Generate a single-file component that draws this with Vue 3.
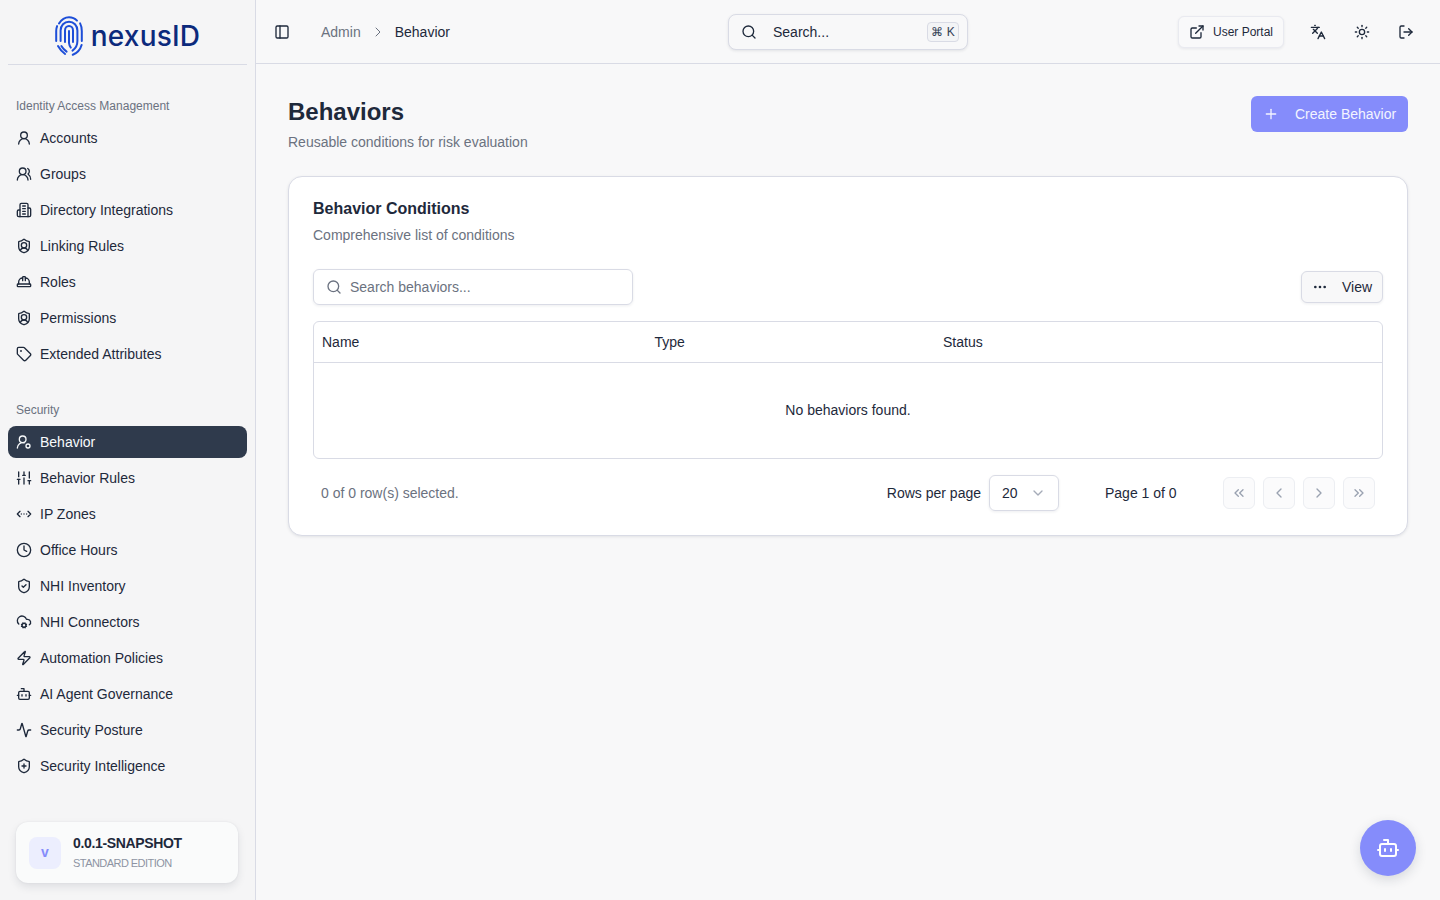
<script setup>
import { ref } from "vue";

const shield =
  '<path d="M20 13c0 5-3.5 7.5-7.66 8.95a1 1 0 0 1-.67-.01C7.5 20.5 4 18 4 13V6a1 1 0 0 1 1-1c2 0 4.5-1.2 6.24-2.72a1.17 1.17 0 0 1 1.52 0C14.51 3.81 17 5 19 5a1 1 0 0 1 1 1z"/>';

const icons = {
  user: '<circle cx="12" cy="8" r="5"/><path d="M20 21a8 8 0 0 0-16 0"/>',
  users:
    '<path d="M18 21a8 8 0 0 0-16 0"/><circle cx="10" cy="8" r="5"/><path d="M22 20c0-3.37-2-6.5-4-8a5 5 0 0 0-.45-8.3"/>',
  building:
    '<path d="M6 22V4a2 2 0 0 1 2-2h8a2 2 0 0 1 2 2v18Z"/><path d="M6 12H4a2 2 0 0 0-2 2v6a2 2 0 0 0 2 2h2"/><path d="M18 9h2a2 2 0 0 1 2 2v9a2 2 0 0 1-2 2h-2"/><path d="M10 6h4"/><path d="M10 10h4"/><path d="M10 14h4"/><path d="M10 18h4"/>',
  shieldUser:
    shield + '<path d="M6.376 18.91a6 6 0 0 1 11.249.003"/><circle cx="12" cy="11" r="4"/>',
  hardHat:
    '<path d="M10 10V5a1 1 0 0 1 1-1h2a1 1 0 0 1 1 1v5"/><path d="M14 6a6 6 0 0 1 6 6v3"/><path d="M4 15v-3a6 6 0 0 1 6-6"/><rect x="2" y="15" width="20" height="4" rx="1"/>',
  tag: '<path d="M12.586 2.586A2 2 0 0 0 11.172 2H4a2 2 0 0 0-2 2v7.172a2 2 0 0 0 .586 1.414l8.704 8.704a2.426 2.426 0 0 0 3.42 0l6.58-6.58a2.426 2.426 0 0 0 0-3.42z"/><circle cx="7.5" cy="7.5" r=".5" fill="currentColor"/>',
  userCog:
    '<path d="M2 21a8 8 0 0 1 10.434-7.62"/><circle cx="10" cy="8" r="5"/><circle cx="18" cy="18" r="3"/>',
  sliders:
    '<path d="M4 21v-7"/><path d="M4 10V3"/><path d="M12 21v-9"/><path d="M12 8V3"/><path d="M20 21v-5"/><path d="M20 12V3"/><path d="M2 14h4"/><path d="M10 8h4"/><path d="M18 16h4"/>',
  chevronsDots:
    '<path d="m18 8 4 4-4 4"/><path d="m6 8-4 4 4 4"/><path d="M8 12h.01"/><path d="M12 12h.01"/><path d="M16 12h.01"/>',
  clock: '<circle cx="12" cy="12" r="10"/><polyline points="12 6 12 12 16 14"/>',
  shieldCheck: shield + '<path d="m9 12 2 2 4-4"/>',
  cloudCog:
    '<circle cx="12" cy="17" r="3"/><path d="M4.2 15.1A7 7 0 1 1 15.71 8h1.79a4.5 4.5 0 0 1 2.5 8.2"/><path d="m15.7 18.4-.9-.3"/><path d="m9.2 15.9-.9-.3"/><path d="m10.6 20.7.3-.9"/><path d="m13.1 14.2.3-.9"/><path d="m13.6 20.7-.4-1"/><path d="m10.8 14.3-.4-1"/><path d="m8.3 18.6 1-.4"/><path d="m14.7 15.8 1-.4"/>',
  zap: '<path d="M4 14a1 1 0 0 1-.78-1.63l9.9-10.2a.5.5 0 0 1 .86.46l-1.92 6.02A1 1 0 0 0 13 10h7a1 1 0 0 1 .78 1.63l-9.9 10.2a.5.5 0 0 1-.86-.46l1.92-6.02A1 1 0 0 0 11 14z"/>',
  bot: '<path d="M12 8V4H8"/><rect x="4" y="8" width="16" height="12" rx="2"/><path d="M2 14h2"/><path d="M20 14h2"/><path d="M15 13v2"/><path d="M9 13v2"/>',
  activity:
    '<path d="M22 12h-2.48a2 2 0 0 0-1.93 1.46l-2.35 8.36a.25.25 0 0 1-.48 0L9.24 2.18a.25.25 0 0 0-.48 0l-2.35 8.36A2 2 0 0 1 4.49 12H2"/>',
  shieldPlus: shield + '<path d="M9 12h6"/><path d="M12 9v6"/>',
  panel: '<rect x="3" y="3" width="18" height="18" rx="2"/><path d="M9 3v18"/>',
  search: '<path d="m21 21-4.34-4.34"/><circle cx="11" cy="11" r="8"/>',
  external:
    '<path d="M15 3h6v6"/><path d="M10 14 21 3"/><path d="M18 13v6a2 2 0 0 1-2 2H5a2 2 0 0 1-2-2V8a2 2 0 0 1 2-2h6"/>',
  languages:
    '<path d="m5 8 6 6"/><path d="m4 14 6-6 2-3"/><path d="M2 5h12"/><path d="M7 2h1"/><path d="m22 22-5-10-5 10"/><path d="M14 18h6"/>',
  sun: '<circle cx="12" cy="12" r="4"/><path d="M12 2v2"/><path d="M12 20v2"/><path d="m4.93 4.93 1.41 1.41"/><path d="m17.66 17.66 1.41 1.41"/><path d="M2 12h2"/><path d="M20 12h2"/><path d="m6.34 17.66-1.41 1.41"/><path d="m19.07 4.93-1.41 1.41"/>',
  logout:
    '<path d="m16 17 5-5-5-5"/><path d="M21 12H9"/><path d="M9 21H5a2 2 0 0 1-2-2V5a2 2 0 0 1 2-2h4"/>',
  plus: '<path d="M5 12h14"/><path d="M12 5v14"/>',
  ellipsis:
    '<circle cx="12" cy="12" r="1"/><circle cx="19" cy="12" r="1"/><circle cx="5" cy="12" r="1"/>',
  chevronRight: '<path d="m9 18 6-6-6-6"/>',
  chevronLeft: '<path d="m15 18-6-6 6-6"/>',
  chevronDown: '<path d="m6 9 6 6 6-6"/>',
  chevronsLeft: '<path d="m11 17-5-5 5-5"/><path d="m18 17-5-5 5-5"/>',
  chevronsRight: '<path d="m6 17 5-5-5-5"/><path d="m13 17 5-5-5-5"/>',
};

const groups = ref([
  {
    label: "Identity Access Management",
    items: [
      { name: "Accounts", icon: "user" },
      { name: "Groups", icon: "users" },
      { name: "Directory Integrations", icon: "building" },
      { name: "Linking Rules", icon: "shieldUser" },
      { name: "Roles", icon: "hardHat" },
      { name: "Permissions", icon: "shieldUser" },
      { name: "Extended Attributes", icon: "tag" },
    ],
  },
  {
    label: "Security",
    items: [
      { name: "Behavior", icon: "userCog", active: true },
      { name: "Behavior Rules", icon: "sliders" },
      { name: "IP Zones", icon: "chevronsDots" },
      { name: "Office Hours", icon: "clock" },
      { name: "NHI Inventory", icon: "shieldCheck" },
      { name: "NHI Connectors", icon: "cloudCog" },
      { name: "Automation Policies", icon: "zap" },
      { name: "AI Agent Governance", icon: "bot" },
      { name: "Security Posture", icon: "activity" },
      { name: "Security Intelligence", icon: "shieldPlus" },
    ],
  },
]);

const pageButtons = ["chevronsLeft", "chevronLeft", "chevronRight", "chevronsRight"];
const topIcons = ["languages", "sun", "logout"];
</script>

<template>
  <div class="layout">
    <aside class="sidebar">
      <div class="brand">
        <svg class="print" viewBox="0 0 28 40" fill="none" stroke="#1d4ed8" stroke-width="2" stroke-linecap="round">
          <path d="M4 7.5C6.4 3.6 10 1.2 14 1.2c3.2 0 6 1.3 8 3.4" />
          <path d="M1.2 25V15c0-1.8.3-3.4.9-4.9" />
          <path d="M25.1 7.4c1.1 2.1 1.7 4.6 1.7 7.6v10" />
          <path d="M3 30c1.7 3 4.1 5.9 7.1 8" />
          <path d="M26.6 29c-1.2 4.2-3.6 7.8-8.8 9.8" />
          <path d="M5.6 25V14.5C5.6 9.6 9.2 5.8 14 5.8s8.4 3.8 8.4 8.7V25c0 4.2-1.7 7.4-4.9 9.6" />
          <path d="M10 26V14.4c0-2.5 1.8-4.4 4-4.4s4 1.9 4 4.4V26" />
          <path d="M6.4 30c1.3 2.2 3 4.1 5.2 5.6" />
          <path d="M14 15v12c.2 2 .8 3.4 1.8 4.6" />
        </svg>
        <span class="wordmark">nexusID</span>
      </div>

      <nav class="nav">
        <section v-for="group in groups" :key="group.label" class="group">
          <div class="group-label">{{ group.label }}</div>
          <a v-for="item in group.items" :key="item.name" class="nav-item" :class="{ active: item.active }">
            <svg class="ic" viewBox="0 0 24 24" v-html="icons[item.icon]"></svg>
            <span>{{ item.name }}</span>
          </a>
        </section>
      </nav>

      <div class="version">
        <div class="version-badge">v</div>
        <div>
          <div class="version-name">0.0.1-SNAPSHOT</div>
          <div class="version-edition">STANDARD EDITION</div>
        </div>
      </div>
    </aside>

    <div class="main">
      <header class="topbar">
        <div class="top-left">
          <button class="icon-btn"><svg class="ic" viewBox="0 0 24 24" v-html="icons.panel"></svg></button>
          <div class="crumbs">
            <span class="crumb-muted">Admin</span>
            <svg class="ic crumb-sep" viewBox="0 0 24 24" v-html="icons.chevronRight"></svg>
            <span>Behavior</span>
          </div>
        </div>
        <div class="top-search">
          <svg class="ic" viewBox="0 0 24 24" v-html="icons.search"></svg>
          <span class="top-search-text">Search...</span>
          <kbd>⌘ K</kbd>
        </div>
        <div class="top-right">
          <button class="portal"><svg class="ic" viewBox="0 0 24 24" v-html="icons.external"></svg>User Portal</button>
          <button v-for="name in topIcons" :key="name" class="icon-btn">
            <svg class="ic" viewBox="0 0 24 24" v-html="icons[name]"></svg>
          </button>
        </div>
      </header>

      <main class="content">
        <div class="page-head">
          <div>
            <h1>Behaviors</h1>
            <p>Reusable conditions for risk evaluation</p>
          </div>
          <button class="create"><svg class="ic" viewBox="0 0 24 24" v-html="icons.plus"></svg>Create Behavior</button>
        </div>

        <div class="card">
          <h2>Behavior Conditions</h2>
          <p class="card-desc">Comprehensive list of conditions</p>

          <div class="toolbar">
            <label class="filter">
              <svg class="ic" viewBox="0 0 24 24" v-html="icons.search"></svg>
              <input placeholder="Search behaviors..." />
            </label>
            <button class="view"><svg class="ic" viewBox="0 0 24 24" v-html="icons.ellipsis"></svg>View</button>
          </div>

          <div class="table-wrap">
            <table>
              <thead>
                <tr>
                  <th class="col-name">Name</th>
                  <th class="col-type">Type</th>
                  <th>Status</th>
                </tr>
              </thead>
              <tbody>
                <tr>
                  <td colspan="3">No behaviors found.</td>
                </tr>
              </tbody>
            </table>
          </div>

          <div class="pager">
            <span class="selected">0 of 0 row(s) selected.</span>
            <div class="pager-right">
              <span>Rows per page</span>
              <div class="select">20<svg class="ic" viewBox="0 0 24 24" v-html="icons.chevronDown"></svg></div>
              <span class="page-num">Page 1 of 0</span>
              <div class="page-btns">
                <button v-for="name in pageButtons" :key="name">
                  <svg class="ic" viewBox="0 0 24 24" v-html="icons[name]"></svg>
                </button>
              </div>
            </div>
          </div>
        </div>
      </main>
    </div>

    <button class="fab"><svg class="ic" viewBox="0 0 24 24" v-html="icons.bot"></svg></button>
  </div>
</template>

<style>
html,
body {
  margin: 0;
  background: #f8f8f9;
}
</style>

<style scoped>
.layout {
  display: flex;
  height: 900px;
  overflow: hidden;
  font-family: "Liberation Sans", Arial, sans-serif;
  font-size: 14px;
  color: #1e293b;
  background: #f8f8f9;
}
button {
  font-family: inherit;
  color: inherit;
  cursor: pointer;
}
.ic {
  width: 16px;
  height: 16px;
  flex: none;
  fill: none;
  stroke: currentColor;
  stroke-width: 2;
  stroke-linecap: round;
  stroke-linejoin: round;
}

.sidebar {
  width: 239px;
  flex: none;
  display: flex;
  flex-direction: column;
  background: #f5f5f6;
  border-right: 1px solid #d9dbe5;
  padding: 0 8px;
}
.brand {
  height: 65px;
  display: flex;
  align-items: center;
  justify-content: center;
  gap: 8px;
  border-bottom: 1px solid #d9dbe5;
  box-sizing: border-box;
  flex: none;
  padding-top: 8px;
}
.print {
  width: 28px;
  height: 40px;
}
.wordmark {
  font-family: Inter, sans-serif;
  font-size: 28px;
  font-weight: 500;
  letter-spacing: 0.2px;
  color: #0c2a7c;
  line-height: 1;
}
.nav {
  flex: 1;
  padding-top: 25px;
}
.group {
  margin-bottom: 24px;
}
.group-label {
  height: 32px;
  line-height: 32px;
  padding-left: 8px;
  font-size: 12px;
  color: #6b7280;
}
.nav-item {
  display: flex;
  align-items: center;
  gap: 8px;
  height: 32px;
  margin-bottom: 4px;
  padding: 0 8px;
  border-radius: 8px;
  color: #1e293b;
}
.nav-item.active {
  background: #2f3a4c;
  color: #f8fafc;
  font-weight: 500;
}
.version {
  flex: none;
  margin: 0 9px 17px 8px;
  height: 61px;
  padding-left: 13px;
  display: flex;
  align-items: center;
  gap: 12px;
  background: #fafbfb;
  border-radius: 12px;
  box-shadow: 0 4px 8px rgba(30, 41, 59, 0.1), 0 0 2px rgba(30, 41, 59, 0.08);
}
.version-badge {
  width: 32px;
  height: 32px;
  box-sizing: border-box;
  padding-bottom: 2px;
  border-radius: 8px;
  background: #eceefe;
  color: #858cfb;
  display: flex;
  align-items: center;
  justify-content: center;
  font-weight: 700;
  font-size: 14px;
}
.version-name {
  font-weight: 700;
  font-size: 14px;
  letter-spacing: -0.35px;
  line-height: 20px;
}
.version-edition {
  font-size: 11px;
  letter-spacing: -0.55px;
  color: #8d94a3;
  line-height: 20px;
}

.main {
  flex: 1;
  min-width: 0;
  display: flex;
  flex-direction: column;
}
.topbar {
  height: 64px;
  flex: none;
  box-sizing: border-box;
  display: grid;
  grid-template-columns: 1fr 240px 1fr;
  align-items: center;
  padding: 0 20px;
  border-bottom: 1px solid #d9dbe5;
}
.top-left {
  display: flex;
  align-items: center;
  gap: 25px;
  margin-left: -8px;
}
.icon-btn {
  width: 28px;
  height: 28px;
  padding: 0;
  background: none;
  border: 0;
  display: flex;
  align-items: center;
  justify-content: center;
}
.crumbs {
  display: flex;
  align-items: center;
  gap: 9px;
}
.crumb-muted {
  color: #6b7280;
}
.crumb-sep {
  color: #6b7280;
  stroke-width: 1.5;
}
.top-search {
  height: 36px;
  box-sizing: border-box;
  display: flex;
  align-items: center;
  padding: 0 8px 0 12px;
  border: 1px solid #d9dbe5;
  border-radius: 8px;
  background: #f8f8f9;
  box-shadow: 0 1px 3px rgba(30, 41, 59, 0.1);
}
.top-search-text {
  margin-left: 16px;
  flex: 1;
}
kbd {
  font-family: inherit;
  font-size: 12px;
  width: 32px;
  height: 20px;
  line-height: 18px;
  box-sizing: border-box;
  text-align: center;
  white-space: nowrap;
  border: 1px solid #d9dbe5;
  border-radius: 4px;
  background: #f3f4f6;
  color: #334155;
}
.top-right {
  display: flex;
  align-items: center;
  justify-content: flex-end;
  gap: 16px;
}
.portal {
  height: 32px;
  width: 106px;
  margin-right: 4px;
  display: flex;
  align-items: center;
  justify-content: center;
  gap: 8px;
  padding: 0;
  font-size: 12px;
  background: #f9f9fa;
  border: 1px solid #e9eaf0;
  border-radius: 6px;
  box-shadow: 0 1px 3px rgba(30, 41, 59, 0.08);
}

.content {
  padding: 32px;
}
.page-head {
  display: flex;
  justify-content: space-between;
  align-items: flex-start;
  margin-bottom: 24px;
}
h1 {
  margin: 0;
  font-size: 24px;
  line-height: 32px;
  font-weight: 700;
}
.page-head p {
  margin: 4px 0 0;
  line-height: 20px;
  color: #6b7280;
}
.create {
  width: 157px;
  height: 36px;
  display: flex;
  align-items: center;
  padding: 0 12px;
  gap: 16px;
  font-size: 14px;
  white-space: nowrap;
  color: #f3f4ff;
  background: #858cfb;
  border: 0;
  border-radius: 6px;
}
.card {
  box-sizing: border-box;
  height: 360px;
  padding: 24px;
  background: #fff;
  border: 1px solid #d9dbe5;
  border-radius: 14px;
  box-shadow: 0 1px 3px rgba(30, 41, 59, 0.1);
}
h2 {
  margin: 0;
  font-size: 16px;
  line-height: 16px;
  font-weight: 700;
}
.card-desc {
  margin: 8px 0 0;
  line-height: 20px;
  color: #6b7280;
}
.toolbar {
  margin-top: 24px;
  display: flex;
  align-items: center;
  justify-content: space-between;
  height: 36px;
}
.filter {
  width: 320px;
  height: 36px;
  box-sizing: border-box;
  display: flex;
  align-items: center;
  gap: 8px;
  padding: 0 12px;
  color: #6b7280;
  border: 1px solid #d9dbe5;
  border-radius: 6px;
  box-shadow: 0 1px 3px rgba(30, 41, 59, 0.08);
}
.filter input {
  flex: 1;
  min-width: 0;
  border: 0;
  outline: 0;
  padding: 0;
  background: none;
  font: inherit;
  color: inherit;
}
.filter input::placeholder {
  color: #6b7280;
  opacity: 1;
}
.view {
  width: 82px;
  height: 32px;
  display: flex;
  align-items: center;
  justify-content: center;
  gap: 14px;
  padding: 0;
  font-size: 14px;
  background: #f8f8f9;
  border: 1px solid #d9dbe5;
  border-radius: 6px;
  box-shadow: 0 1px 3px rgba(30, 41, 59, 0.08);
}
.table-wrap {
  margin-top: 16px;
  border: 1px solid #d9dbe5;
  border-radius: 6px;
  height: 138px;
  box-sizing: border-box;
}
table {
  width: 100%;
  border-collapse: collapse;
  table-layout: fixed;
}
th {
  height: 40px;
  padding: 0 8px;
  text-align: left;
  font-weight: 400;
  border-bottom: 1px solid #d9dbe5;
}
.col-name {
  width: 316.5px;
}
.col-type {
  width: 272.5px;
}
td {
  height: 93px;
  padding: 0 0 2px;
  text-align: center;
}
.pager {
  margin-top: 16px;
  height: 36px;
  display: flex;
  align-items: center;
  justify-content: space-between;
  padding: 0 8px;
}
.selected {
  color: #6b7280;
}
.pager-right {
  display: flex;
  align-items: center;
}
.select {
  width: 70px;
  height: 36px;
  box-sizing: border-box;
  margin-left: 8px;
  padding: 0 12px;
  display: flex;
  align-items: center;
  justify-content: space-between;
  border: 1px solid #d9dbe5;
  border-radius: 6px;
  box-shadow: 0 1px 3px rgba(30, 41, 59, 0.08);
}
.select .ic {
  color: #a5abb8;
}
.page-num {
  margin-left: 46px;
  width: 118px;
}
.page-btns {
  display: flex;
  gap: 8px;
}
.page-btns button {
  width: 32px;
  height: 32px;
  padding: 0;
  display: flex;
  align-items: center;
  justify-content: center;
  color: #9aa2b1;
  background: #fbfbfc;
  border: 1px solid #eceef2;
  border-radius: 6px;
}
.fab {
  position: fixed;
  left: 1360px;
  top: 820px;
  width: 56px;
  height: 56px;
  padding: 0;
  border: 0;
  border-radius: 50%;
  display: flex;
  align-items: center;
  justify-content: center;
  background: #858cfb;
  color: #fff;
  box-shadow: 0 4px 12px rgba(30, 41, 59, 0.15);
}
.fab .ic {
  width: 24px;
  height: 24px;
}
</style>
